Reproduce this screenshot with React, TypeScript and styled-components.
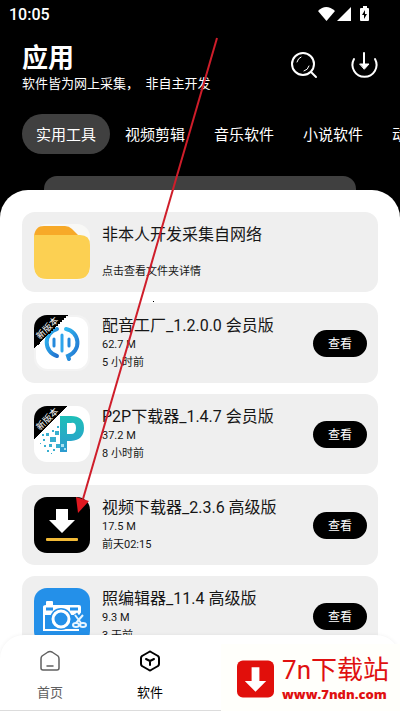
import React from "react";
import styled, { createGlobalStyle } from "styled-components";

const GlobalStyle = createGlobalStyle`
  * { box-sizing: border-box; }
  body {
    margin: 0;
    background: #000;
    font-family: Roboto, "Noto Sans CJK SC", sans-serif;
    color: #161616;
  }
  button { font: inherit; color: inherit; border: 0; padding: 0; background: none; cursor: pointer; }
  h1, h2, p, ul { margin: 0; padding: 0; }
  ul { list-style: none; }
  svg { display: block; }
`;

const Screen = styled.div`
  position: relative;
  height: 100vh;
  display: flex;
  flex-direction: column;
  overflow: hidden;
  background: #000;
`;

const StatusBar = styled.div`
  flex: none;
  display: flex;
  align-items: center;
  justify-content: space-between;
  height: 28px;
  padding: 0 30px 0 9px;
  color: #fff;
  font-size: 16px;
  font-weight: 500;
`;

const StatusIcons = styled.div`
  display: flex;
  align-items: center;
  gap: 2px;
`;

const Header = styled.header`
  flex: none;
  display: flex;
  justify-content: space-between;
  padding: 14px 20px 20px 22px;
  color: #fff;
`;

const PageTitle = styled.h1`
  font-size: 26px;
  line-height: 32px;
  font-weight: 700;
`;

const Subtitle = styled.p`
  font-size: 13px;
  line-height: 20px;
  white-space: pre;
`;

const Actions = styled.div`
  display: flex;
  align-items: center;
  gap: 28px;
  height: 46px;
`;

const IconButton = styled.button`
  width: 32px;
  height: 32px;
`;

const Categories = styled.nav`
  flex: none;
  display: flex;
  gap: 1px;
  padding-left: 22px;
  overflow: hidden;
`;

const Category = styled.button<{ $active?: boolean }>`
  flex: none;
  height: 40px;
  padding: 0 14px 2px;
  border-radius: 20px;
  color: #fff;
  font-size: 15px;
  background: ${(p) => (p.$active ? "#404040" : "transparent")};
`;

const BackPlate = styled.div`
  flex: none;
  height: 14px;
  margin: 22px 44px 0;
  border-radius: 13px 13px 0 0;
  background: #404040;
`;

const Sheet = styled.main`
  flex: 1;
  min-height: 0;
  overflow: hidden;
  padding: 22px 22px 0;
  border-radius: 28px 28px 0 0;
  background: #fff;
`;

const List = styled.ul`
  display: flex;
  flex-direction: column;
  gap: 11px;
`;

const Card = styled.li`
  display: flex;
  align-items: center;
  gap: 12px;
  height: 80px;
  padding: 12px 11px 12px 12px;
  border-radius: 13px;
  background: #efefef;
`;

const AppIcon = styled.div`
  flex: none;
  position: relative;
  width: 56px;
  height: 56px;
  border-radius: 13px;
  overflow: hidden;
`;

const Ribbon = styled.div`
  position: absolute;
  top: 0;
  left: 0;
  display: flex;
  align-items: center;
  justify-content: center;
  width: 34px;
  height: 34px;
  padding: 0 8px 8px 0;
  background: linear-gradient(135deg, #000 50%, transparent 50%);
`;

const RibbonLabel = styled.span`
  flex: none;
  transform: rotate(-45deg);
  color: #fff;
  font-size: 9px;
  line-height: 10px;
  white-space: nowrap;
`;

const Info = styled.div`
  flex: 1;
  min-width: 0;
  height: 58px;
  padding-top: 2px;
  display: flex;
  flex-direction: column;
  justify-content: space-between;
`;

const AppName = styled.h2`
  font-size: 16px;
  line-height: 20px;
  font-weight: 400;
  white-space: nowrap;
`;

const Meta = styled.p`
  font-size: 11px;
  line-height: 18px;
`;

const ViewButton = styled.button`
  flex: none;
  width: 54px;
  height: 27px;
  padding-bottom: 1px;
  border-radius: 14px;
  background: #000;
  color: #fff;
  font-size: 12px;
`;

const BottomNav = styled.nav`
  flex: none;
  position: relative;
  display: grid;
  grid-template-columns: repeat(4, 1fr);
  height: 76px;
  margin-top: -24px;
  border-radius: 24px 24px 0 0;
  border-bottom: 1px solid #dcdcdc;
  background: #fff;
  box-shadow: 0 0 4px rgba(0, 0, 0, 0.06);
`;

const NavItem = styled.button<{ $active?: boolean }>`
  display: flex;
  flex-direction: column;
  align-items: center;
  gap: 10px;
  padding-top: 14px;
  color: ${(p) => (p.$active ? "#000" : "#606060")};
  font-size: 13px;
  line-height: 20px;
`;

const Watermark = styled.div`
  position: absolute;
  right: 0;
  bottom: 0;
  display: flex;
  align-items: center;
  gap: 8px;
  height: 67px;
  padding: 3px 11px 0 16px;
  background: #fffffb;
  color: #e01010;
`;

const SiteName = styled.div`
  font-size: 26px;
  line-height: 30px;
  white-space: nowrap;
`;

const SiteUrl = styled.div`
  font-family: "Open Sans", sans-serif;
  font-size: 13px;
  line-height: 18px;
  font-weight: 800;
`;

const Pointer = styled.svg`
  position: absolute;
  left: 0;
  top: 0;
  pointer-events: none;
`;

const FolderIcon = () => (
  <svg width="56" height="56" viewBox="0 0 56 56">
    <rect width="56" height="56" fill="#f8f8f6" />
    <path d="M0 30V10Q0 2 10 2H31Q35 2 38 5L46 13V30Z" fill="#f7a928" />
    <path d="M0 11H46Q56 11 56 21V42Q56 55 43 55H13Q0 55 0 42Z" fill="#fcd052" />
  </svg>
);

const DubbingIcon = () => (
  <svg width="56" height="56" viewBox="0 0 56 56" fill="none" strokeLinecap="round">
    <defs>
      <linearGradient id="dub" x1="0" y1="0" x2="1" y2="1">
        <stop offset="0" stopColor="#2fb8f0" />
        <stop offset="1" stopColor="#2272cf" />
      </linearGradient>
    </defs>
    <rect width="56" height="56" fill="#f3f3f3" />
    <rect x="2" y="2" width="52" height="52" rx="12" fill="#fff" />
    <g stroke="url(#dub)" strokeWidth="4">
      <path d="M23 14A14 14 0 0 0 23 41" />
      <path d="M32 14A14 14 0 0 1 34 41L35 44" />
    </g>
    <g stroke="#2589dc" strokeWidth="3">
      <path d="M20 24V31" />
      <path d="M28 20V36" stroke="#2fa5ec" />
      <path d="M35 24V31" />
    </g>
  </svg>
);

const P2PIcon = () => (
  <svg width="56" height="56" viewBox="0 0 56 56">
    <defs>
      <linearGradient id="p2p" x1="0" y1="0" x2="0" y2="1">
        <stop offset="0" stopColor="#1ebfb8" />
        <stop offset="1" stopColor="#2c9bd0" />
      </linearGradient>
    </defs>
    <rect width="56" height="56" fill="#fff" />
    <path
      fillRule="evenodd"
      fill="url(#p2p)"
      d="M26 10H37Q50 10 50 22T37 35H33V46H26ZM33 17V28H37Q42 28 42 22T37 17Z"
    />
    <g fill="#38afd0">
      <path d="M16 31h6v5h-6zM21 25h4v4h-4zM12 27h3v3h-3zM22 38h4v4h-4zM15 38h3v3h-3zM9 33h2v2H9zM10 39h2v2h-2zM18 24h2v2h-2zM19 43h2v2h-2zM13 44h2v2h-2zM8 28h2v2H8zM6 37h1v1H6zM17 47h1v1h-1zM23 20h2v2h-2z" />
    </g>
    <path d="M27 38h3v3h-3zM30 42h2v2h-2z" fill="#a6e1f0" />
  </svg>
);

const VideoDownloadIcon = () => (
  <svg width="56" height="56" viewBox="0 0 56 56">
    <rect width="56" height="56" fill="#000" />
    <path d="M22 12H34V23H41L28 36L15 23H22Z" fill="#fff" />
    <rect x="12" y="41" width="32" height="3" rx="1" fill="#f2ba37" />
  </svg>
);

const CameraIcon = () => (
  <svg width="56" height="56" viewBox="0 0 56 56" fill="none">
    <rect width="56" height="56" fill="#2490e9" />
    <path d="M12 17V14Q12 13 13 13H18Q19 13 19 14V17H45Q47 17 47 19V27H9V19Q9 17 12 17Z" fill="#fff" />
    <path d="M12 21H19M36 21H44" stroke="#2490e9" strokeWidth="3" />
    <path d="M10 26V42H45" stroke="#fff" strokeWidth="2" />
    <circle cx="27" cy="31" r="11" fill="#2490e9" />
    <circle cx="27" cy="31" r="8" stroke="#fff" strokeWidth="3" />
    <g stroke="#2490e9" strokeWidth="5"><path d="M41 26L47 35M49 26L42 35" /></g>
    <g stroke="#e8f6ff" strokeWidth="2">
      <path d="M41 27L47 35M49 27L42 35" />
      <ellipse cx="42" cy="37" rx="3" ry="2" />
      <ellipse cx="49" cy="37" rx="3" ry="2" />
    </g>
  </svg>
);

type AppEntry = {
  name: string;
  size?: string;
  updated: string;
  icon: React.ReactNode;
  isNew?: boolean;
};

const apps: AppEntry[] = [
  { name: "非本人开发采集自网络", updated: "点击查看文件夹详情", icon: <FolderIcon /> },
  { name: "配音工厂_1.2.0.0 会员版", size: "62.7 M", updated: "5 小时前", icon: <DubbingIcon />, isNew: true },
  { name: "P2P下载器_1.4.7 会员版", size: "37.2 M", updated: "8 小时前", icon: <P2PIcon />, isNew: true },
  { name: "视频下载器_2.3.6 高级版", size: "17.5 M", updated: "前天02:15", icon: <VideoDownloadIcon /> },
  { name: "照编辑器_11.4 高级版", size: "9.3 M", updated: "3 天前", icon: <CameraIcon /> },
];

const categories = ["实用工具", "视频剪辑", "音乐软件", "小说软件", "动漫软件"];

export default function App() {
  return (
    <Screen>
      <GlobalStyle />
      <StatusBar>
        <span>10:05</span>
        <StatusIcons>
          <svg width="17" height="14" viewBox="0 0 17 14" fill="#fff">
            <path d="M0 4Q8 -4 17 4L8.500 14Z" />
          </svg>
          <svg width="14" height="14" viewBox="0 0 14 14" fill="#fff">
            <path d="M14 0V14H0Z" />
          </svg>
          <svg width="17" height="16" viewBox="0 0 17 16">
            <path d="M10 2V0H14V2H15Q16 2 16 3V14Q16 15 15 15H8Q7 15 7 14V3Q7 2 8 2Z" fill="#fff" />
            <path d="M12 4L9 9H11V13L14 8H12Z" fill="#000" />
          </svg>
        </StatusIcons>
      </StatusBar>
      <Header>
        <div>
          <PageTitle>应用</PageTitle>
          <Subtitle>{"软件皆为网上采集，  非自主开发"}</Subtitle>
        </div>
        <Actions>
          <IconButton aria-label="搜索">
            <svg width="32" height="32" viewBox="0 0 32 32" fill="none" stroke="#fff" strokeWidth="2" strokeLinecap="round">
              <circle cx="15" cy="15" r="11" />
              <path d="M23 23L28 28" />
              <path d="M9 13Q10 9 13 8M21 17Q20 21 16 22" strokeWidth="1" />
            </svg>
          </IconButton>
          <IconButton aria-label="下载">
            <svg width="32" height="32" viewBox="0 0 32 32" fill="none" stroke="#fff" strokeWidth="2" strokeLinecap="round">
              <path d="M6 10A12 12 0 1 0 27 10" />
              <path d="M16 4V18" />
              <path d="M12 15H21L16.500 20Z" fill="#fff" strokeWidth="1" />
            </svg>
          </IconButton>
        </Actions>
      </Header>
      <Categories>
        {categories.map((label, i) => (
          <Category key={label} $active={i === 0}>{label}</Category>
        ))}
      </Categories>
      <BackPlate />
      <Sheet>
        <List>
          {apps.map((app) => (
            <Card key={app.name}>
              <AppIcon>
                {app.icon}
                {app.isNew && (
                  <Ribbon>
                    <RibbonLabel>新版本</RibbonLabel>
                  </Ribbon>
                )}
              </AppIcon>
              <Info>
                <AppName>{app.name}</AppName>
                {app.size && <Meta>{app.size}</Meta>}
                <Meta>{app.updated}</Meta>
              </Info>
              {app.size && <ViewButton>查看</ViewButton>}
            </Card>
          ))}
        </List>
      </Sheet>
      <BottomNav>
        <NavItem>
          <svg width="24" height="24" viewBox="0 0 24 24" fill="none" stroke="currentColor" strokeWidth="1.5" strokeLinejoin="round" strokeLinecap="round">
            <path d="M3 10Q3 8 4 7L10 3Q12 2 14 3L20 7Q21 8 21 10V19Q21 21 19 21H5Q3 21 3 19Z" />
            <path d="M9 17H15" />
          </svg>
          首页
        </NavItem>
        <NavItem $active>
          <svg width="24" height="24" viewBox="0 0 24 24" fill="none" stroke="currentColor" strokeWidth="2" strokeLinejoin="round" strokeLinecap="round">
            <path d="M11 3Q12 2 13 3L20 7Q21 8 21 9V15Q21 16 20 17L13 21Q12 22 11 21L4 17Q3 16 3 15V9Q3 8 4 7Z" />
            <path d="M8 10L12 12L16 10M12 12V16" />
          </svg>
          软件
        </NavItem>
      </BottomNav>
      <Watermark>
        <svg width="37" height="38" viewBox="0 0 38 38">
          <rect width="38" height="38" rx="6" fill="#e10f0b" />
          <path d="M15 7H23V21H30L19 32L8 21H15Z" fill="#fff" />
        </svg>
        <div>
          <SiteName>7n下载站</SiteName>
          <SiteUrl>www.7ndn.com</SiteUrl>
        </div>
      </Watermark>
      <Pointer width="400" height="711" viewBox="0 0 400 711" aria-hidden="true">
        <path d="M217 38L83 499" stroke="#cf1d2a" strokeWidth="2" />
        <path d="M76 497L89 501L78 513Z" fill="#e01820" />
        <rect x="153" y="301" width="1" height="1" fill="#000" />
      </Pointer>
    </Screen>
  );
}
